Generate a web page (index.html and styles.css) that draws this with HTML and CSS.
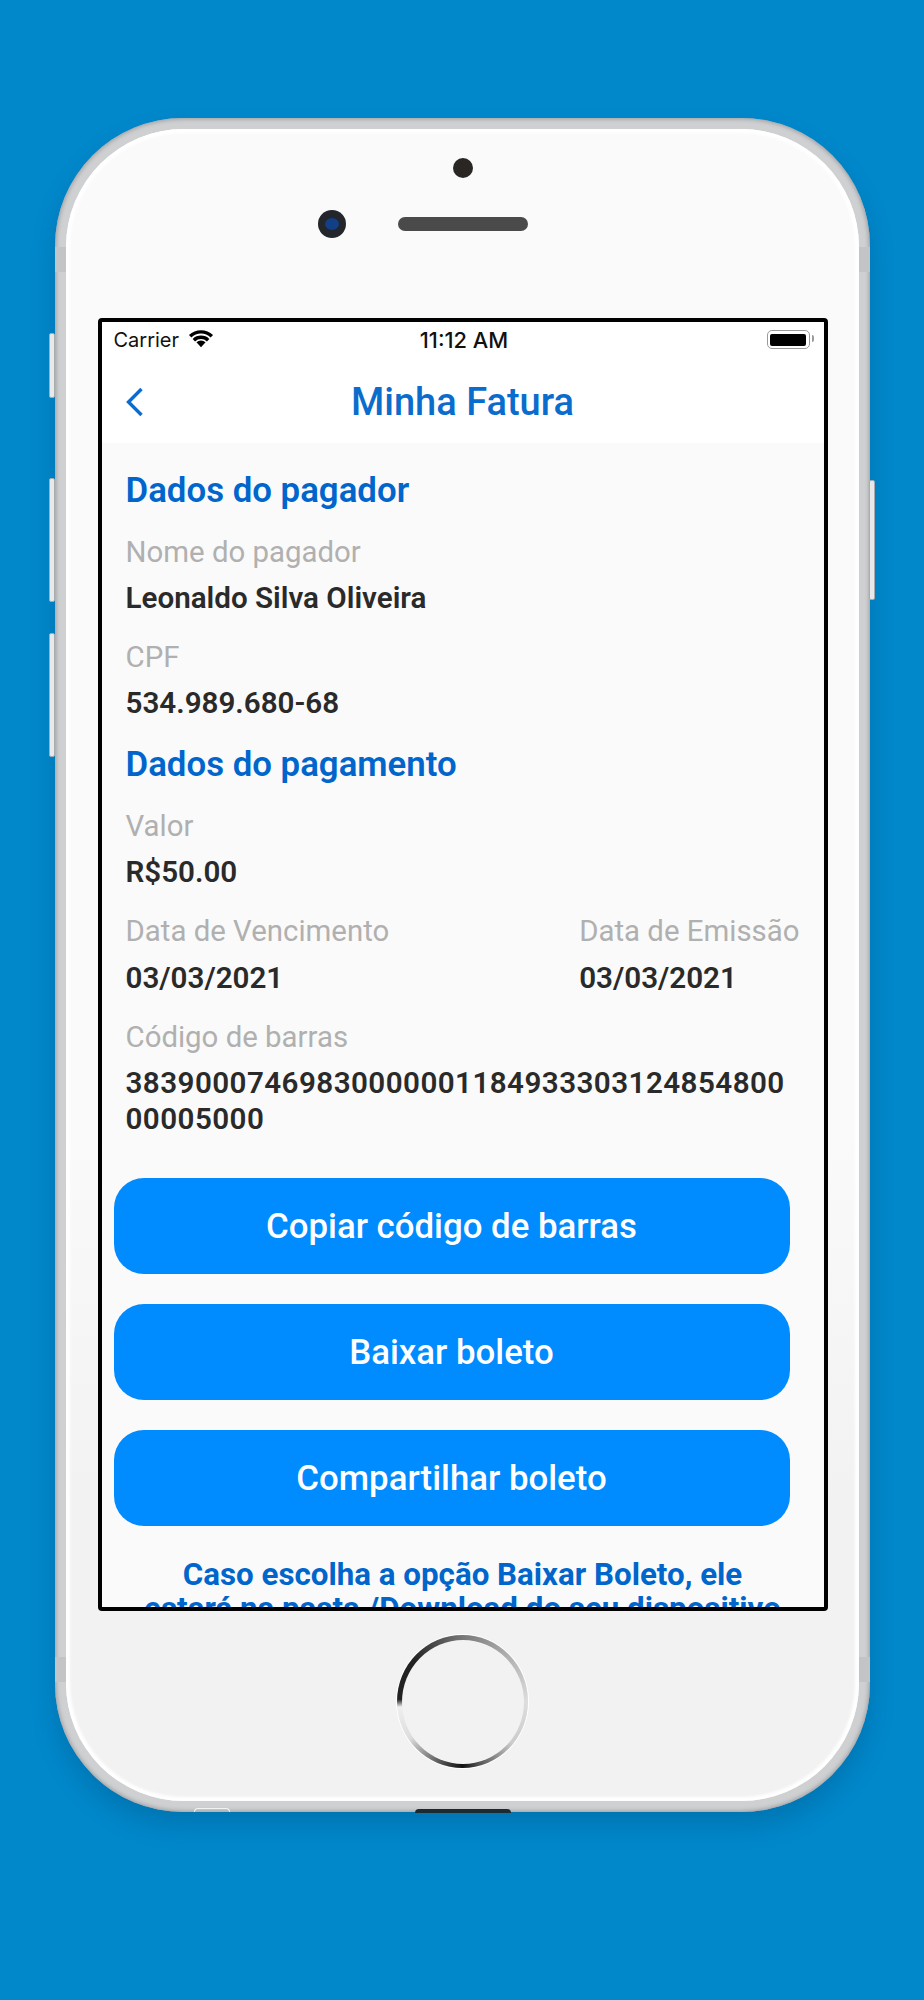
FILE: index.html
```html
<!DOCTYPE html>
<html>
<head>
    <link rel="stylesheet" href="styles.css">
</head>
<body>
    <div class="phone">
        <div class="side-btn mute"></div>
        <div class="side-btn vol-up"></div>
        <div class="side-btn vol-down"></div>
        <div class="side-btn power"></div>
        <div class="band band-tl"></div>
        <div class="band band-tr"></div>
        <div class="band band-bl"></div>
        <div class="band band-br"></div>
        <div class="jack"></div>
        <div class="port"></div>

        <div class="face">
            <div class="sensor"></div>
            <div class="ear-row">
                <div class="camera"><div class="lens"></div></div>
                <div class="speaker"></div>
            </div>

            <div class="screen">
                <div class="status-bar">
                    <div class="carrier">
                        Carrier
                        <svg class="wifi" viewBox="0 0 24 18">
                            <path d="M12 17.5 7.8 13a6 6 0 0 1 8.4 0z" fill="#000"/>
                            <path d="M2 7.4a14.4 14.4 0 0 1 20 0M5.4 11a9.6 9.6 0 0 1 13.2 0" fill="none" stroke="#000" stroke-width="3.2"/>
                        </svg>
                    </div>
                    <div class="time">11:12 AM</div>
                    <div class="battery"><div class="battery-fill"></div></div>
                </div>

                <div class="nav-bar">
                    <svg class="back" viewBox="0 0 18 30">
                        <path d="M15.5 2 2.5 15l13 13" fill="none" stroke="#0a6ccc" stroke-width="3.4"/>
                    </svg>
                    <div class="nav-title">Minha Fatura</div>
                </div>

                <div class="content">
                    <h2 class="section-title">Dados do pagador</h2>
                    <div class="field">
                        <div class="label">Nome do pagador</div>
                        <div class="value">Leonaldo Silva Oliveira</div>
                    </div>
                    <div class="field">
                        <div class="label">CPF</div>
                        <div class="value">534.989.680-68</div>
                    </div>

                    <h2 class="section-title">Dados do pagamento</h2>
                    <div class="field">
                        <div class="label">Valor</div>
                        <div class="value">R$50.00</div>
                    </div>
                    <div class="field-row">
                        <div class="field">
                            <div class="label">Data de Vencimento</div>
                            <div class="value">03/03/2021</div>
                        </div>
                        <div class="field">
                            <div class="label">Data de Emissão</div>
                            <div class="value">03/03/2021</div>
                        </div>
                    </div>
                    <div class="field">
                        <div class="label">Código de barras</div>
                        <div class="value barcode">3839000746983000000118493330312485480000005000</div>
                    </div>

                    <div class="actions">
                        <button class="action-btn">Copiar código de barras</button>
                        <button class="action-btn">Baixar boleto</button>
                        <button class="action-btn">Compartilhar boleto</button>
                    </div>

                    <p class="note">Caso escolha a opção Baixar Boleto, ele estará na pasta /Download do seu dispositivo</p>
                </div>
            </div>

            <div class="home-btn"><div class="home-inner"></div></div>
        </div>
    </div>
</body>
</html>
```

FILE: styles.css
```css
body {
    margin: 0;
    min-height: 2000px;
    background-color: #0088cb;
    font-family: Roboto, sans-serif;
    overflow: hidden;
}

.phone {
    position: relative;
    box-sizing: border-box;
    width: 815px;
    height: 1694px;
    margin: 118px 0 0 55px;
    padding: 11px;
    border-radius: 128px;
    background-color: #cfd0d2;
    box-shadow: inset 0 0 4px 1px #9a9c9f, 0 14px 24px rgba(0, 50, 90, 0.22);
}

.side-btn {
    position: absolute;
    width: 6px;
    background-color: #e8e9ea;
    border: 1px solid #a9acae;
    box-sizing: border-box;
    border-radius: 2px;
}

.mute { left: -6px; top: 215px; height: 65px; }
.vol-up { left: -6px; top: 360px; height: 124px; }
.vol-down { left: -6px; top: 515px; height: 124px; }
.power { right: -5px; top: 362px; height: 120px; }

.band {
    position: absolute;
    width: 11px;
    height: 25px;
    background-color: #c2c4c6;
}

.band-tl { left: 0; top: 129px; }
.band-tr { right: 0; top: 129px; }
.band-bl { left: 0; top: 1539px; }
.band-br { right: 0; top: 1539px; }

.jack {
    position: absolute;
    left: 139px;
    bottom: 0;
    width: 36px;
    height: 4px;
    border-radius: 18px 18px 0 0;
    border: 1px solid #f2f2f2;
    border-bottom: 0;
    box-sizing: border-box;
}

.port {
    position: absolute;
    left: 360px;
    bottom: -1px;
    width: 96px;
    height: 4px;
    border-radius: 4px 4px 0 0;
    background-color: #1b2a33;
}

.face {
    box-sizing: border-box;
    height: 100%;
    padding-top: 29px;
    border-radius: 118px;
    background: linear-gradient(#fafafa 0, #fafafa 60%, #f2f2f2 82%, #f2f2f2 100%);
    box-shadow: inset 0 0 3px 4px #ffffff;
}

.sensor {
    width: 20px;
    height: 20px;
    margin: 0 auto;
    border-radius: 50%;
    background-color: #2a2624;
}

.ear-row {
    display: grid;
    grid-template-columns: 1fr 130px 1fr;
    align-items: center;
    margin-top: 32px;
}

.camera {
    grid-column: 1;
    justify-self: end;
    display: flex;
    align-items: center;
    justify-content: center;
    width: 28px;
    height: 28px;
    margin-right: 52px;
    border-radius: 50%;
    background-color: #23262b;
}

.lens {
    width: 14px;
    height: 12px;
    border-radius: 50%;
    background-color: #123f86;
}

.speaker {
    height: 14px;
    border-radius: 7px;
    background-color: #4a4a4a;
}

.screen {
    box-sizing: border-box;
    width: 730px;
    height: 1293px;
    margin: 80px auto 0;
    border: 4px solid #000;
    border-radius: 4px;
    background-color: #fafafa;
    overflow: hidden;
}

.status-bar {
    display: grid;
    grid-template-columns: 1fr auto 1fr;
    align-items: center;
    height: 35px;
    padding: 0 12px;
    background-color: #fff;
    font-family: Inter, sans-serif;
    font-size: 20px;
    color: #111;
}

.carrier {
    display: flex;
    align-items: center;
    gap: 9px;
}

.wifi {
    width: 26px;
    height: 20px;
    margin-top: -3px;
}

.time {
    margin-left: 3px;
    font-size: 21.8px;
    font-weight: 500;
}

.battery {
    position: relative;
    justify-self: end;
    box-sizing: border-box;
    width: 43px;
    height: 19px;
    padding: 2.5px;
    margin-right: 2px;
    border: 1.5px solid #9a9a9a;
    border-radius: 5px;
}

.battery::after {
    content: "";
    position: absolute;
    right: -5px;
    top: 4px;
    width: 2px;
    height: 7px;
    border-radius: 0 2px 2px 0;
    background-color: #9a9a9a;
}

.battery-fill {
    height: 100%;
    border-radius: 2px;
    background-color: #000;
}

.nav-bar {
    position: relative;
    display: flex;
    align-items: center;
    justify-content: center;
    height: 86px;
    padding-top: 3px;
    box-sizing: border-box;
    background-color: #fff;
}

.back {
    position: absolute;
    left: 24px;
    top: 30px;
    width: 18px;
    height: 30px;
}

.nav-title {
    font-size: 38px;
    font-weight: 500;
    color: #0a6ccc;
}

.content {
    padding: 27px 24px 0;
}

.section-title {
    margin: 0 0 24px;
    font-size: 34.8px;
    line-height: 40px;
    font-weight: 600;
    color: #0066cc;
}

.field {
    margin-bottom: 23px;
}

.field-row {
    display: flex;
    justify-content: space-between;
}

.field-row .label {
    margin-bottom: 11px;
}

.label {
    margin-bottom: 10px;
    font-size: 29.4px;
    line-height: 36px;
    color: #b0b0b0;
}

.value {
    font-size: 29.6px;
    line-height: 36px;
    font-weight: 600;
    color: #2a2a2a;
}

.barcode {
    padding-right: 12px;
    letter-spacing: 0.44px;
    word-break: break-all;
}

.actions {
    display: flex;
    flex-direction: column;
    gap: 30px;
    width: 676px;
    margin: 41px 0 0 -12px;
}

.action-btn {
    height: 96px;
    border: 0;
    border-radius: 30px;
    background-color: #008bff;
    color: #fff;
    font-family: Roboto, sans-serif;
    font-size: 34.8px;
    font-weight: 500;
}

.note {
    margin: 32px 0 0;
    padding: 0 18px;
    font-size: 31.3px;
    line-height: 34px;
    font-weight: 700;
    text-align: center;
    color: #0066cc;
}

.home-btn {
    display: flex;
    align-items: center;
    justify-content: center;
    width: 131px;
    height: 133px;
    margin: 24px auto 0;
    border-radius: 50%;
    background: conic-gradient(#777 0, #aaa 40deg, #ddd 90deg, #ccc 130deg, #555 165deg, #111 180deg, #555 200deg, #ddd 235deg, #eee 265deg, #222 272deg, #222 310deg, #777 360deg);
    box-shadow: 0 0 0 1px #fff;
}

.home-inner {
    width: 122px;
    height: 124px;
    border-radius: 50%;
    background-color: #f2f2f2;
}
```
